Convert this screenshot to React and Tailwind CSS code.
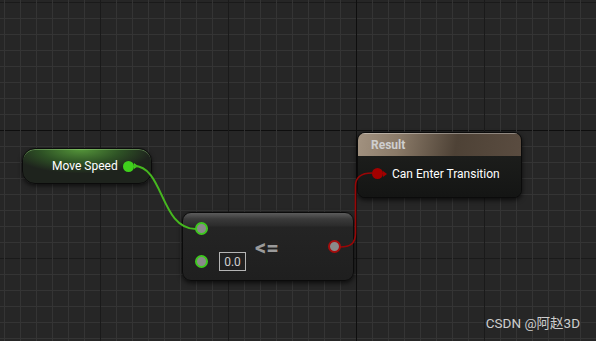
import React from 'react';

const W = 596;
const H = 341;

const GridLines = () => {
  const xs = [];
  for (let x = 4; x < W; x += 16) xs.push(x);
  const ys = [];
  for (let y = 2; y < H; y += 16) ys.push(y);

  const lineColor = (v, origin) => {
    if (v === origin) return '#0e0e0e';
    if ((v - origin) % 128 === 0) return '#1a1a1a';
    return '#343434';
  };

  return (
    <svg className="absolute inset-0" width={W} height={H}>
      {ys.map((y) => (
        <rect key={'y' + y} x={0} y={y} width={W} height={1} fill={lineColor(y, 130)} />
      ))}
      {xs.map((x) => (
        <rect key={'x' + x} x={x} y={0} width={1} height={H} fill={lineColor(x, 356)} />
      ))}
    </svg>
  );
};

// wires sit on top of the nodes, like in the editor capture
const Wires = () => (
  <svg className="absolute inset-0 pointer-events-none" width={W} height={H} fill="none">
    <path d="M134,166 C164,166 160,229 196,229" stroke="#46b81f" strokeWidth="2" />
    <path
      d="M340,247 C350,247 355.5,244 355.5,233 L355.5,186 C355.5,177 362,173 372,173"
      stroke="#980606"
      strokeWidth="1.6"
    />
  </svg>
);

const HollowPin = ({ ring }) => (
  <div className={`relative z-10 w-[13px] h-[13px] shrink-0 rounded-full border-2 bg-[#8a8a8a] ${ring}`} />
);

const Arrow = ({ color }) => (
  <div className={`w-0 h-0 border-y-[3px] border-y-transparent border-l-[4px] ${color}`} />
);

const MoveSpeedNode = () => (
  <div className="absolute left-[22px] top-[148px] w-[130px] h-[36px] rounded-[13px] border border-[#0b0b0b] bg-[radial-gradient(ellipse_70%_90%_at_45%_0%,#55963a_0%,#2e5225_45%,#1e231d_80%)] shadow-[0_2px_4px_rgba(0,0,0,0.6),inset_0_1px_0_rgba(190,255,160,0.35)] flex items-center pl-[29px]">
    <span className="text-[12px] leading-[16px] text-white whitespace-nowrap">Move Speed</span>
    <div className="ml-[5px] w-[11px] h-[11px] rounded-full bg-[#3fd01c]" />
    <Arrow color="border-l-[#3fd01c]" />
  </div>
);

const CompareNode = () => (
  <div className="absolute left-[182px] top-[212px] w-[172px] h-[69px] rounded-[9px] border border-[#0b0b0b] bg-[linear-gradient(to_bottom,#5c5c5c_0px,#3a3a3a_6px,#2b2b2b_13px,#242424_14px,#1f1f1f_100%)] shadow-[0_2px_5px_rgba(0,0,0,0.7)] flex">
    <div className="flex flex-col pl-[12px] pt-[9px] gap-[17px]">
      <HollowPin ring="border-[#3ec81e]" />
      <div className="flex items-center gap-[11px]">
        <HollowPin ring="border-[#3ec81e]" />
        <div className="w-[27px] h-[19px] border border-[#b5b5b5] flex items-center justify-center text-[12px] leading-none text-[#cfcfcf]">
          0.0
        </div>
      </div>
    </div>
    <div className="ml-[9px] flex items-center pt-[2px] text-[22px] leading-none font-bold text-[#9a9a9a]">
      &lt;=
    </div>
    <div className="flex-1 flex items-center justify-end pr-[12px]">
      <HollowPin ring="border-[#a50d0d]" />
    </div>
  </div>
);

const ResultNode = () => (
  <div className="absolute left-[357px] top-[132px] w-[165px] h-[66px] rounded-[8px] border border-[#0b0b0b] overflow-hidden bg-[#181a18] shadow-[0_2px_5px_rgba(0,0,0,0.7)] flex flex-col">
    <div className="h-[23px] bg-[linear-gradient(100deg,#a29280_0%,#8a7a68_25%,#4e4236_60%,#5a4c40_100%)] shadow-[inset_0_1px_0_rgba(255,255,255,0.35)] flex items-center pl-[13px]">
      <span className="text-[12px] font-bold text-[#cfcfcf] leading-none">Result</span>
    </div>
    <div className="flex-1 bg-[linear-gradient(to_bottom,#1c1d1b,#141514)] flex items-center pl-[14px] pb-[6px]">
      <div className="w-[11px] h-[11px] rounded-full bg-[#a30000]" />
      <Arrow color="border-l-[#a30000]" />
      <span className="ml-[5px] text-[12px] text-white leading-none whitespace-nowrap">
        Can Enter Transition
      </span>
    </div>
  </div>
);

export default function App() {
  return (
    <div className="relative w-[596px] h-[341px] overflow-hidden bg-[#262626] font-['Roboto',sans-serif]">
      <GridLines />
      <MoveSpeedNode />
      <CompareNode />
      <ResultNode />
      <Wires />
      <div className="absolute right-[16px] bottom-[8px] text-[13.5px] text-[#cdcdcd] font-['Roboto','Noto_Sans_CJK_SC',sans-serif] whitespace-nowrap">
        CSDN @阿赵3D
      </div>
    </div>
  );
}
